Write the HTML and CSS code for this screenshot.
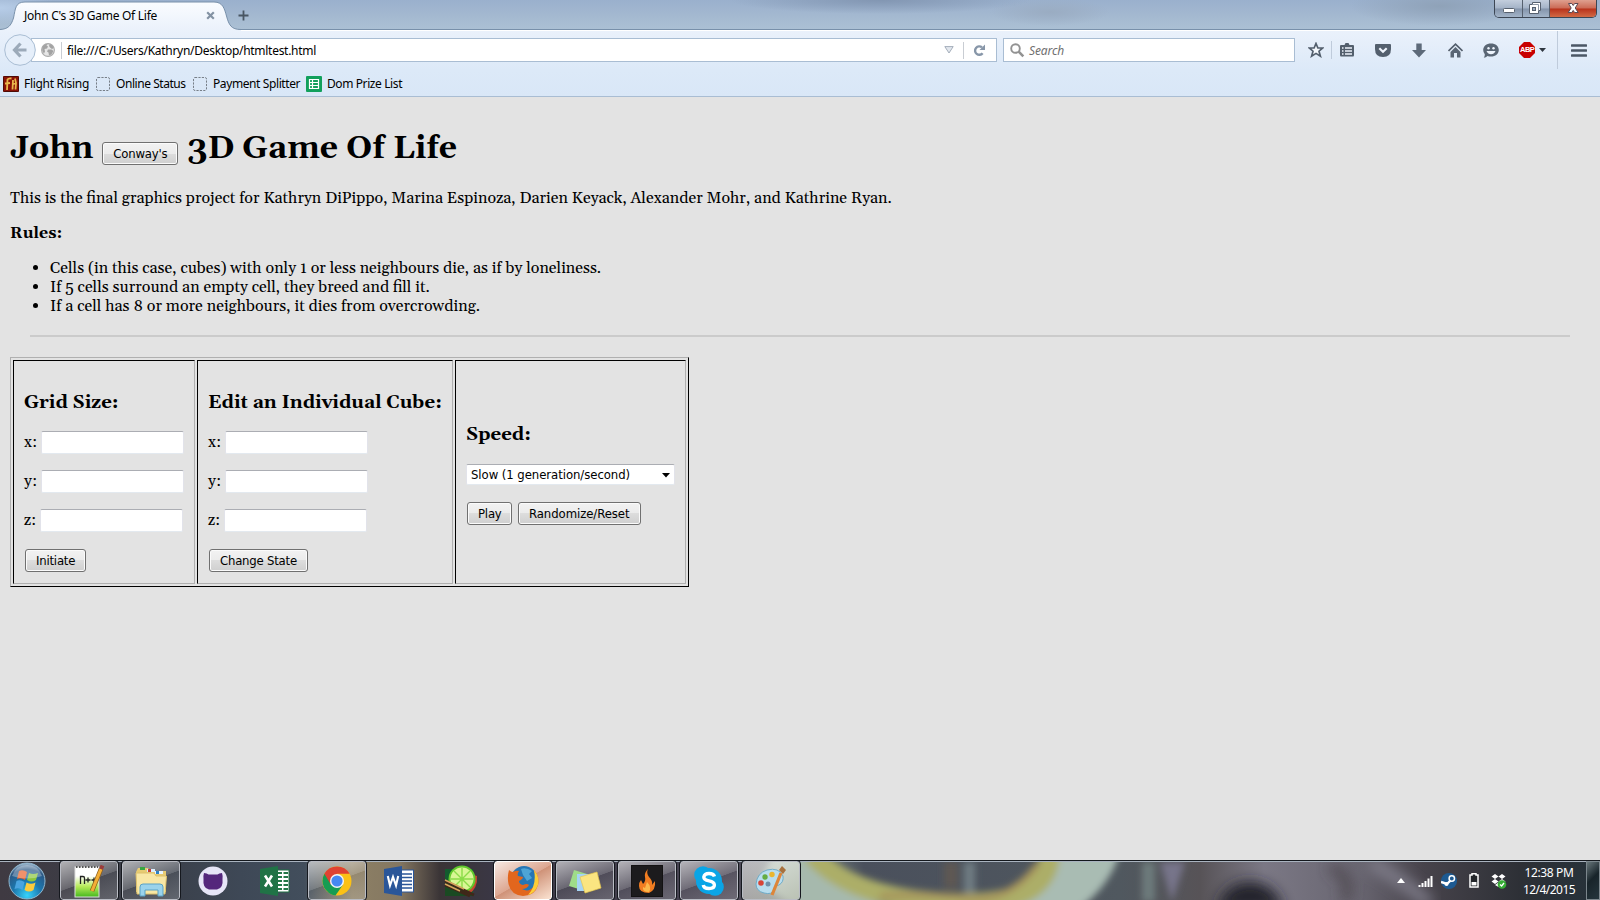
FILE: index.html
```html
<!DOCTYPE html>
<html lang="en">
<head>
<meta charset="utf-8">
<title>John C's 3D Game Of Life</title>
<link rel="stylesheet" href="styles.css">
</head>
<body>
<div class="screen">
  <header class="titlebar">
    <div class="tab">
      <svg class="tab-shape" width="242" height="31" viewBox="0 0 242 31"><path d="M0 31V29.5C8 29 11 26 13.500 18C15.500 9 15 2 25 2H214C223 2 224.500 9 226.500 16C229 25 231 29.500 241 29.500V31Z" fill="url(#tabg)"/><path d="M0 29.500C8 29 11 26 13.500 18C15.500 9 15 2 25 2H214C223 2 224.500 9 226.500 16C229 25 231 29.500 241 29.500" fill="none" stroke="#7890aa"/><defs><linearGradient id="tabg" x2="0" y2="1"><stop stop-color="#fafcff"/><stop offset="1" stop-color="#eaf1fb"/></linearGradient></defs></svg>
      <span class="tab-title">John C's 3D Game Of Life</span>
      <svg class="tab-x" width="9" height="9" viewBox="0 0 9 9"><path d="M1.200 1.200L7.800 7.800M7.800 1.200L1.200 7.800" stroke="#8392a3" stroke-width="2.200"/></svg>
    </div>
    <svg class="plus" width="11" height="11" viewBox="0 0 11 11"><path d="M5.500 .5V10.500M.5 5.500H10.500" stroke="#495663" stroke-width="1.800"/></svg>
    <div class="winbtns">
      <span class="wb wmin"><svg width="28" height="17"><rect x="8.500" y="8.500" width="11" height="4" rx="1" fill="#fff" stroke="#56606e"/></svg></span>
      <span class="wb wmax"><svg width="26" height="17"><path d="M9.500 2.500H17.500V10.500H15.500V13.500H6.500V4.500H9.500Z" fill="#fff" stroke="#56606e"/><path d="M9.500 4.500H15.500V10.500" fill="none" stroke="#8b95a3"/><rect x="9.500" y="7.500" width="3" height="3" fill="#9aabc0" stroke="#56606e"/></svg></span>
      <span class="wb wclose"><svg width="46" height="17"><path d="M18.500 3.500H21.800L23.200 5.500L24.600 3.500H28L25.200 8L28.200 12.500H24.600L23.200 10.400L21.800 12.500H18.200L21.200 8Z" fill="#fff" stroke="#5b4a55"/></svg></span>
    </div>
  </header>
  <nav class="toolbar">
    <svg class="back" width="32" height="32" viewBox="0 0 32 32"><circle cx="16" cy="16" r="15.300" fill="#e6effa" stroke="#a9bdd3"/><path d="M10.500 16H22.500M16.500 9.500L10.500 16L16.500 22.500" fill="none" stroke="#9caab9" stroke-width="3.200"/></svg>
    <div class="urlbar">
      <svg class="globe" width="14" height="14" viewBox="0 0 14 14"><circle cx="7" cy="7" r="6.400" fill="#e6e6e6" stroke="#aaa" stroke-width="1.100"/><path d="M1.200 4.500Q3 1 6.500 1L5.500 2.500L7 3.500L6 5.500L3.500 6L4 8.500L3 10.500Q.5 8 1.200 4.500Z" fill="#a3a3a3"/><path d="M8.500 1.200Q11.500 1.500 12.800 5L11 6L9 4.500L8 3ZM7 6.500L10.500 6.500L12.500 8L10.500 11.500L8 12.500L7.500 9.500L6 8.500Z" fill="#a3a3a3"/></svg>
      <i class="vline"></i>
      <span class="url">file:///C:/Users/Kathryn/Desktop/htmltest.html</span>
      <svg class="drop" width="10" height="8" viewBox="0 0 10 8"><path d="M.8 .6H9.200L5 7Z" fill="#e2e7ee" stroke="#a4aeba"/></svg>
      <i class="vline v2"></i>
      <svg class="reload" width="13" height="13" viewBox="0 0 13 13"><path d="M9.600 9.200A4.200 4.200 0 1 1 9 3.400" fill="none" stroke="#8796a8" stroke-width="2.400"/><path d="M12 .5V6H6.500Z" fill="#8796a8"/></svg>
    </div>
    <div class="search">
      <svg width="15" height="15" viewBox="0 0 15 15"><circle cx="5.500" cy="5.500" r="4.300" fill="none" stroke="#929292" stroke-width="1.900"/><path d="M8.700 8.700L13.300 13.300" stroke="#929292" stroke-width="2.600"/></svg>
      <span class="ph">Search</span>
    </div>
    <div class="icons">
      <svg width="16" height="16" viewBox="0 0 16 16"><path d="M8 1.500L9.900 6H14.700L11 9.200L12.400 14.200L8 11.400L3.600 14.200L5 9.200L1.300 6H6.100Z" fill="#f4f8fd" stroke="#535f6d" stroke-width="1.700"/></svg>
      <i class="sep"></i>
      <svg class="i2" width="16" height="16" viewBox="0 0 16 16"><path d="M2 3H5.500L6.500 1H9.500L10.500 3H14Q15 3 15 4V13Q15 14.500 14 14.500H2Q1 14.500 1 13V4Q1 3 2 3Z" fill="#535f6d"/><path d="M3 6H4.500M6 6H13M3 9H4.500M6 9H13M3 12H4.500M6 12H13" stroke="#eef4fc" stroke-width="1.500"/></svg>
      <svg class="i3" width="16" height="15" viewBox="0 0 16 15"><path d="M1 1H15Q16 1 16 2V6Q16 14 8 14Q0 14 0 6V2Q0 1 1 1Z" fill="#535f6d"/><path d="M4.300 5.300L8 8.800L11.700 5.300" fill="none" stroke="#eef4fc" stroke-width="2.200"/></svg>
      <svg class="i4" width="14" height="15" viewBox="0 0 14 15"><path d="M4.300 .5H9.700V7H14L7 14.500L0 7H4.300Z" fill="#5d6a79"/></svg>
      <svg class="i5" width="15" height="15" viewBox="0 0 15 15"><path d="M.5 8L7.500 1.200L14.500 8" fill="none" stroke="#535f6d" stroke-width="1.700"/><path d="M7.500 4L12.500 9V14.500H9V10H6V14.500H2.500V9Z" fill="#5a6674"/></svg>
      <svg class="i6" width="16" height="15" viewBox="0 0 16 15"><path d="M8 .5C12.500 .5 15.800 3.200 15.800 7S12.500 13.500 8 13.500Q6 13.500 4.500 12.900Q3 14.700 .8 14.700Q2 13 1.800 11.200Q.2 9.500 .2 7C.2 3.200 3.500 .5 8 .5Z" fill="#5a6674"/><circle cx="5.500" cy="5.300" r="1.200" fill="#eef4fc"/><circle cx="10.500" cy="5.300" r="1.200" fill="#eef4fc"/><path d="M3.500 8H12.500Q11 11.200 8 11.200T3.500 8Z" fill="#eef4fc"/></svg>
      <span class="abp"><svg width="16" height="16" viewBox="0 0 16 16"><path d="M5 0H11L16 5V11L11 16H5L0 11V5Z" fill="#c80000"/></svg><b>ABP</b></span>
      <svg class="i8" width="7" height="4" viewBox="0 0 7 4"><path d="M0 0H7L3.500 4Z" fill="#2f3740"/></svg>
      <i class="sep s2"></i>
      <svg class="i9" width="16" height="13" viewBox="0 0 16 13"><path d="M1 1.500H15M1 6.500H15M1 11.500H15" stroke="#4b5765" stroke-width="2.600" stroke-linecap="round"/></svg>
    </div>
  </nav>
  <div class="bookmarks">
    <svg width="16" height="16" viewBox="0 0 16 16"><rect width="16" height="16" rx="1" fill="#8a1206"/><path d="M4 14L4.500 3.500Q5.500 2 8.500 2.500M2 7.500L7 7M9.500 13.500L10 4M9.500 8.500L13 7M12.500 13.500L13 7L12 2.500" fill="none" stroke="#e9b64c" stroke-width="1.800"/><rect x=".5" y=".5" width="15" height="15" rx="1" fill="none" stroke="#4d0c06"/></svg>
    <span class="bm b1">Flight Rising</span>
    <svg width="14" height="14" viewBox="0 0 14 14"><rect x=".5" y=".5" width="13" height="13" rx="1.500" fill="none" stroke="#777f88" stroke-dasharray="2.200 1.200"/></svg>
    <span class="bm b2">Online Status</span>
    <svg width="14" height="14" viewBox="0 0 14 14"><rect x=".5" y=".5" width="13" height="13" rx="1.500" fill="none" stroke="#777f88" stroke-dasharray="2.200 1.200"/></svg>
    <span class="bm b3">Payment Splitter</span>
    <svg width="16" height="16" viewBox="0 0 16 16"><rect width="16" height="16" rx="1" fill="#12a05c"/><path d="M3.500 3.500H12.500V12.500H3.500ZM3.500 6.500H12.500M3.500 9.500H12.500M6.500 3.500V12.500" fill="none" stroke="#fff" stroke-width="1.200"/></svg>
    <span class="bm b4">Dom Prize List</span>
  </div>

  <main class="page">
    <h1>John <button class="btn conway">Conway's</button> 3D Game Of Life</h1>
    <p class="intro">This is the final graphics project for Kathryn DiPippo, Marina Espinoza, Darien Keyack, Alexander Mohr, and Kathrine Ryan.</p>
    <p class="rules"><b>Rules:</b></p>
    <ul>
      <li>Cells (in this case, cubes) with only 1 or less neighbours die, as if by loneliness.</li>
      <li>If 5 cells surround an empty cell, they breed and fill it.</li>
      <li>If a cell has 8 or more neighbours, it dies from overcrowding.</li>
    </ul>
    <hr>
    <section class="grid">
      <div class="cell c1">
        <h3>Grid Size:</h3>
        <label><span class="lab">x:</span><input></label>
        <label><span class="lab">y:</span><input></label>
        <label><span class="lab lz">z:</span><input></label>
        <button class="btn">Initiate</button>
      </div>
      <div class="cell c2">
        <h3>Edit an Individual Cube:</h3>
        <label><span class="lab">x:</span><input></label>
        <label><span class="lab">y:</span><input></label>
        <label><span class="lab lz">z:</span><input></label>
        <button class="btn">Change State</button>
      </div>
      <div class="cell c3">
        <h3>Speed:</h3>
        <div class="select"><span>Slow (1 generation/second)</span><svg width="8" height="5" viewBox="0 0 8 5"><path d="M0 0H8L4 4.600Z"/></svg></div>
        <div class="btns"><button class="btn play">Play</button><button class="btn rand">Randomize/Reset</button></div>
      </div>
    </section>
  </main>

  <footer class="taskbar">
    <svg class="wall" width="1600" height="40" viewBox="0 0 1600 40">
      <defs><filter id="bl" x="-5%" y="-50%" width="110%" height="200%"><feGaussianBlur stdDeviation="7"/></filter><filter id="bs" x="-5%" y="-50%" width="110%" height="200%"><feGaussianBlur stdDeviation="3.500"/></filter>
      <linearGradient id="wg"><stop stop-color="#3f3a42"/><stop offset=".1" stop-color="#3a3f49"/><stop offset=".15" stop-color="#3e4856"/><stop offset=".19" stop-color="#424e5c"/><stop offset=".22" stop-color="#8d8065"/><stop offset=".25" stop-color="#847761"/><stop offset=".275" stop-color="#3a3436"/><stop offset=".31" stop-color="#3a3745"/><stop offset=".46" stop-color="#4a4654"/><stop offset=".5" stop-color="#7c8a88"/><stop offset=".54" stop-color="#4a505c"/><stop offset=".7" stop-color="#50585f"/><stop offset=".75" stop-color="#575357"/><stop offset=".79" stop-color="#7b7885"/><stop offset=".85" stop-color="#686570"/><stop offset=".89" stop-color="#47434b"/><stop offset=".95" stop-color="#2d3036"/><stop offset="1" stop-color="#26323a"/></linearGradient></defs>
      <rect width="1600" height="40" fill="url(#wg)"/>
      <g filter="url(#bs)"><path d="M775 -10H805Q840 30 900 50H800L760 20Z" fill="#a6b9ad"/><path d="M1120 -10H1055Q1020 30 980 50H1075Q1110 25 1120 -10Z" fill="#a9bcb3"/><path d="M812 -8Q850 36 948 41T1050 -8" fill="none" stroke="#acae68" stroke-width="20"/><path d="M880 34Q930 32 970 36T1038 2" fill="none" stroke="#a5915a" stroke-width="6"/><path d="M944 0H958V26H944Z" fill="#5f5952"/><path d="M964 0H975V31H964Z" fill="#6f7d83"/><path d="M1142 0H1155V40H1142Z" fill="#6d7a7c"/><path d="M1160 0H1185L1172 40Z" fill="#77748a"/></g>
      <g filter="url(#bl)"><path d="M1216 48Q1225 20 1250 20T1284 48Z" fill="#202029"/><path d="M1370 0Q1405 20 1430 42" stroke="#817f8c" stroke-width="12" fill="none"/><path d="M1330 5Q1355 15 1345 40" stroke="#4b444b" stroke-width="8" fill="none"/></g>
    </svg>
    <div class="tasks">
      <span class="task"><svg width="38" height="38" viewBox="0 0 38 38"><defs><radialGradient id="orb" cx=".5" cy=".9" r=".9"><stop stop-color="#37d3fb"/><stop offset=".45" stop-color="#1c76ad"/><stop offset=".8" stop-color="#2b5784"/><stop offset="1" stop-color="#a8c0d4"/></radialGradient></defs><circle cx="19" cy="19" r="18" fill="url(#orb)" stroke="#8fb7cf"/><path d="M11 9Q15 7 19 10L17 18Q13 15 9 17Z" fill="#e8622c"/><path d="M21 11Q25 13 30 11L28 18Q24 21 19 18Z" fill="#8cc63e"/><path d="M8.500 19Q12 17 16.500 20L14.500 28Q11 25 6.500 27Z" fill="#4aa4e0"/><path d="M18.500 20.500Q23 23 27.500 20.500L25.500 28Q21 31 16.500 28Z" fill="#fccb3c"/><path d="M4 14Q8 3 19 3T34 14Q19 19 4 14Z" fill="#fff" opacity=".3"/></svg></span>
      <span class="task on"><svg width="32" height="34" viewBox="0 0 32 34"><defs><linearGradient id="np" x2="0" y2="1"><stop offset=".3" stop-color="#fff"/><stop offset=".65" stop-color="#b6ea58"/><stop offset="1" stop-color="#45b81d"/></linearGradient></defs><rect x="2" y="3" width="24" height="30" fill="url(#np)" stroke="#ddd"/><path d="M3 3H25" stroke="#555" stroke-width="2" stroke-dasharray="1.500 1.500"/><path d="M7.500 20V12.500H10Q11.500 12.500 11.500 14V20M12.500 16H17.500M15 13.500V18.500M18.500 16H23.500M21 13.500V18.500" fill="none" stroke="#222" stroke-width="1.300"/><path d="M28 5L19 27" stroke="#8a5b17" stroke-width="4.600"/><path d="M28 5L19 27" stroke="#f3ae37" stroke-width="3.200"/><path d="M29.500 1.500L28 5" stroke="#9b3c3b" stroke-width="4"/></svg></span>
      <span class="task on"><svg width="34" height="32" viewBox="0 0 34 32"><path d="M2 7L4 3H14L16 6H32V27H2Z" fill="#e7cb72"/><path d="M6 2H11V5H6Z" fill="#38a640"/><path d="M13 4H21V7H13Z" fill="#d9efff"/><path d="M14 4H17V7H14Z" fill="#c43b35"/><path d="M21 6H29V9H21Z" fill="#e8f4ff"/><path d="M22 6H25V9H22Z" fill="#2c81c4"/><path d="M2 8H20L22 11H32.500L31 29H3Z" fill="#f8e7a5" stroke="#dcc06c"/><path d="M6 31V22Q6 19 9 19H26Q29 19 29 22V31H24V25H11V31Z" fill="#9ad3ec" stroke="#5aa2c6"/></svg></span>
      <span class="task"><svg width="32" height="32" viewBox="0 0 32 32"><circle cx="16" cy="16" r="14.500" fill="#e6e5f7"/><path d="M7 8Q10 8 11.500 9.500H20.500Q22 8 25 8Q26 11 25.500 14Q26.500 23.500 20 24.500H12Q5.500 23.500 6.500 14Q6 11 7 8Z" fill="#54277c"/></svg></span>
      <span class="task"><svg width="32" height="32" viewBox="0 0 32 32"><rect x="15" y="5" width="15" height="22" fill="#fff" stroke="#1f7145"/><path d="M19 8H23M24.500 8H29M19 12H23M24.500 12H29M19 16H23M24.500 16H29M19 20H23M24.500 20H29M19 24H23M24.500 24H29" stroke="#237747" stroke-width="2"/><path d="M1 4L19 1V31L1 28Z" fill="#207346"/><path d="M6 10.500L13 21.500M13 10.500L6 21.500" stroke="#fff" stroke-width="2.600"/></svg></span>
      <span class="task on"><svg width="32" height="32" viewBox="0 0 32 32"><circle cx="16" cy="16" r="14.500" fill="#fbc116"/><path d="M16 16L3.400 8.800A14.500 14.500 0 0 0 14.500 30.400L22.100 19.500Z" fill="#179c52"/><path d="M3.400 8.800A14.500 14.500 0 0 1 28.600 8.800H16L9.800 19.500Z" fill="#df4232"/><circle cx="16" cy="16" r="7" fill="#f5f5f5"/><circle cx="16" cy="16" r="5.600" fill="#4688f1"/></svg></span>
      <span class="task"><svg width="32" height="32" viewBox="0 0 32 32"><rect x="14" y="5" width="16.500" height="22" fill="#fff" stroke="#2a5699"/><path d="M18 9H29M18 12.500H29M18 16H29M18 19.500H29M18 23H29" stroke="#2a5699" stroke-width="1.500"/><path d="M1 4L19 1V31L1 28Z" fill="#2a5699"/><path d="M4.800 11L7 20.500L10 12L13 20.500L15.200 11" fill="none" stroke="#fff" stroke-width="2.100"/></svg></span>
      <span class="task"><svg width="34" height="34" viewBox="0 0 34 34"><rect x="1" y="5" width="28" height="27" fill="#135c2e"/><path d="M20 8L33 12Q34 24 25 30Z" fill="#c44830"/><circle cx="18" cy="15" r="13.500" fill="#61c92d"/><circle cx="18" cy="15" r="11.500" fill="#d9f695"/><path d="M18 4V26M7 15H29M10 7L26 23M26 7L10 23" stroke="#8bdc48" stroke-width="1.400"/><path d="M1 32V16L30 32Z" fill="#1a4a22"/><path d="M1 17L30 31M1 21L26 32" stroke="#402719" stroke-width="3"/><path d="M1 16L20 25M1 20L16 27" stroke="#d6a35e" stroke-width="1.500"/></svg></span>
      <span class="task on fox"><svg width="32" height="32" viewBox="0 0 32 32"><circle cx="17" cy="14" r="13" fill="#2676b5"/><path d="M14 4Q19 2 25 6L22 9L25 13L20 16L16 10Z" fill="#4ea4d6"/><path d="M2 5Q4 7 6 7Q9 5 12 6Q10 9 11 11L16 12Q16 14 12 16Q12 19 16 20Q20 18 22 20Q20 24 15 24Q22 28 27 21Q30 16 27 5Q33 12 31 20Q28 31 16 31Q4 30 1.500 19Q0 12 2 5Z" fill="#e2661d"/><path d="M27 5Q33 12 31 20Q28 28 21 30Q30 20 27 5Z" fill="#fcce38"/></svg></span>
      <span class="task on"><svg width="34" height="32" viewBox="0 0 34 32"><path d="M6 5L19 9L14 25L1 21Z" fill="#9fdc89"/><path d="M9 9H25V26H9Z" fill="#a5d4f5"/><path d="M12 12L29 7L33 23L17 28Z" fill="#fbe581" stroke="#e6c74e" stroke-width=".7"/></svg></span>
      <span class="task on"><svg width="32" height="32" viewBox="0 0 32 32"><rect width="32" height="32" rx="1" fill="#1c1b1d" stroke="#0b0b0b"/><path d="M17 4Q15 8 18 12Q22 16 21 20L24 16Q25 25 18 28Q8 28 8 21Q8 17 10 15L12 19Q15 16 14 12Q13 8 17 4Z" fill="#f17d21"/><path d="M16 17Q21 22 18 27Q11 27 12 22L14 23Z" fill="#fbb84b"/></svg></span>
      <span class="task on"><svg width="32" height="32" viewBox="0 0 32 32"><circle cx="16" cy="16" r="13" fill="#0aa5e6"/><circle cx="10" cy="10" r="8.800" fill="#0aa5e6"/><circle cx="22" cy="22" r="8.800" fill="#0aa5e6"/><path d="M21.500 11.500Q20.500 8.500 16 8.500T10.800 12Q10.800 15 16 15.900T21.400 20Q21.400 23.500 16 23.500T10.300 20" fill="none" stroke="#fff" stroke-width="3.400"/></svg></span>
      <span class="task on paint"><svg width="34" height="32" viewBox="0 0 34 32"><path d="M2 19Q3 8 13 5Q25 2 29 11Q30 17 25 20Q19 21 20 25Q18 30 10 28Q2 26 2 19Z" fill="#b9ddee" stroke="#6fabc7"/><circle cx="7" cy="18" r="2.800" fill="#d74437"/><circle cx="11" cy="12" r="2.700" fill="#65ad43"/><circle cx="18" cy="9.500" r="2.700" fill="#eab52f"/><circle cx="14" cy="19" r="2.500" fill="#6e91ab"/><path d="M27 8L18 30" stroke="#dd863a" stroke-width="3.200"/><path d="M28 1L25 5L29 9L32 5Z" fill="#a8713d"/></svg></span>
    </div>
    <div class="tray">
      <svg class="t1" width="8" height="5" viewBox="0 0 8 5"><path d="M4 0L8 5H0Z" fill="#fff"/></svg>
      <svg class="t2" width="16" height="12" viewBox="0 0 16 12"><path d="M1.500 12V10M4.500 12V8M7.500 12V6M10.500 12V3.500M13.500 12V1" stroke="#fff" stroke-width="2"/></svg>
      <svg class="t3" width="16" height="16" viewBox="0 0 16 16"><circle cx="8" cy="8" r="8" fill="#1d5a92"/><path d="M0 9L6 11L11 6" stroke="#fff" stroke-width="2.400" fill="none"/><circle cx="10.800" cy="5.500" r="2.700" fill="#1d5a92" stroke="#fff" stroke-width="1.500"/><circle cx="5.500" cy="11" r="2" fill="#fff"/></svg>
      <svg class="t4" width="10" height="15" viewBox="0 0 10 15"><path d="M3 2V.8H7V2H9V14H1V2Z" fill="#23262a" stroke="#fff" stroke-width="1.500"/><path d="M2.500 9H7.500V12.500H2.500Z" fill="#fff"/></svg>
      <svg class="t5" width="16" height="16" viewBox="0 0 16 16"><path d="M4 1L7.500 3.500L4 6L.5 3.500ZM11 1L14.500 3.500L11 6L7.500 3.500ZM4 6L7.500 8.500L4 11L.5 8.500ZM11 6L14.500 8.500L11 11L7.500 8.500ZM7.500 9.500L11 12L7.500 14L4 12Z" fill="#fff"/><circle cx="11" cy="11.500" r="4.300" fill="#36ac35"/><path d="M9 11.500L10.600 13L13 10" fill="none" stroke="#fff" stroke-width="1.300"/></svg>
      <div class="clock"><span class="time">12:38 PM</span><span class="date">12/4/2015</span></div>
      <i class="peek"></i>
    </div>
  </footer>
</div>
</body>
</html>
```

FILE: styles.css
```css
* { box-sizing: border-box; }
body { margin: 0; background: #e3e3e3; overflow: hidden; }
svg { display: block; flex: none; }
i { display: block; flex: none; }
.screen { width: 1600px; height: 900px; display: flex; flex-direction: column; overflow: hidden; color: #000; font: 12px "Noto Sans", sans-serif; white-space: nowrap; }

.titlebar { height: 30px; flex: none; display: flex; background: radial-gradient(ellipse 60px 16px at 0 8px, #b7cde8, transparent), radial-gradient(ellipse 150px 14px at 880px 0, #8296b2, transparent), radial-gradient(ellipse 60px 14px at 1050px 12px, #9aacc2, transparent), radial-gradient(ellipse 90px 20px at 1440px 6px, #8fa2b8, transparent), linear-gradient(#9ab0cd, #a3b8d0 50%, #abc0d4); border-bottom: 1px solid #7890aa; }
.tab { width: 242px; height: 30px; position: relative; display: flex; align-items: center; padding: 1px 0 0 24px; margin-right: -4px; }
.tab-shape { position: absolute; left: 0; top: 0; z-index: 0; }
.tab-title { position: relative; width: 182px; letter-spacing: -.27px; }
.tab-x { position: relative; }
.plus { margin: 10px 0 0 0; }
.winbtns { margin-left: auto; margin-right: 3px; display: flex; width: 103px; height: 18px; border: 1px solid #3c4654; border-top: 0; border-radius: 0 0 5px 5px; overflow: hidden; }
.wb { height: 17px; background: linear-gradient(#c3cedd, #a4b3c7 48%, #8494ab 52%, #a3b4c8); border-right: 1px solid #56606e; }
.wmin { width: 28px; } .wmax { width: 27px; }
.wclose { flex: 1; border: 0; background: linear-gradient(#dfa08f, #cb6a55 48%, #b8321b 52%, #d26a45); }

.toolbar { height: 40px; flex: none; display: flex; background: linear-gradient(#fff 0 1px, #eaf1fb 1px, #dce9f8); }
.back { margin: 4px -5px 0 4px; position: relative; z-index: 1; }
.urlbar, .search { height: 24px; margin-top: 8px; background: #fff; border: 1px solid #a9bdd3; display: flex; align-items: center; }
.urlbar { width: 966px; padding-left: 9px; }
.vline { width: 1px; height: 17px; background: #c9cdd3; margin: 0 5px 0 6px; }
.url { width: 877px; letter-spacing: -.28px; padding-top: 1px; }
.v2 { margin: 0 9px 0 9px; }
.search { width: 292px; margin-left: 6px; padding-left: 6px; }
.ph { margin-left: 4px; font-style: italic; color: #707070; letter-spacing: -.13px; }
.icons { display: flex; align-items: center; height: 40px; flex: 1; padding-left: 13px; }
.sep { width: 1px; height: 18px; background: #bfcbdb; margin: 0 7px; }
.i3 { margin-left: 20px; } .i4 { margin-left: 21px; } .i5 { margin-left: 22px; } .i6 { margin-left: 20px; }
.abp { position: relative; width: 16px; height: 16px; margin-left: 20px; }
.abp b { position: absolute; left: 1px; top: 3px; font: bold 7.500px/10px "Liberation Sans", sans-serif; letter-spacing: -.5px; color: #fff; }
.i8 { margin-left: 4px; }
.s2 { height: 38px; margin: 0 13px 0 11px; }

.bookmarks { height: 27px; flex: none; display: flex; align-items: center; padding: 1px 0 0 3px; background: linear-gradient(#dce9f8, #d9e7f7); border-bottom: 1px solid #a9bdd3; }
.bm { margin-left: 5px; letter-spacing: -.4px; }
.b1 { width: 72px; letter-spacing: -.3px; }
.b2 { width: 77px; letter-spacing: -.45px; margin-left: 6px; }
.b3 { width: 93px; margin-left: 6px; }

.page { flex: 1; padding: 0 10px; font: 16px/19px Gelasio, Georgia, "Liberation Serif", serif; background: #e3e3e3; min-height: 0; }
h1 { margin: 32px 0 0; height: 40px; line-height: 40px; font-size: 32px; }
p { margin: 0; }
.intro { margin-top: 20px; } .rules { margin-top: 16px; }
ul { margin: 16px 0 0; padding: 0 0 0 40px; }
hr { margin: 19px 20px 20px; border: 0; height: 2px; background: #cbcbcb; }
.grid { display: grid; grid-template-columns: 182px 256px 231px; gap: 2px; width: 679px; height: 230px; padding: 2px; border: 1px solid; border-color: #b0b0b0 #000 #000 #b0b0b0; }
.cell { border: 1px solid; border-color: #000 #b0b0b0 #b0b0b0 #000; padding: 31px 10px 0; }
h3 { margin: 0; font-size: 18.720px; line-height: 22px; }
.cell label { display: flex; align-items: center; height: 23px; margin-bottom: 16px; }
.lab { width: 13px; } .lz { width: 12px; }
h3 + label { margin-top: 17px; }
.cell input { width: 143px; height: 23px; margin-left: 4px; padding: 0; background: #fff; border: 1px solid; border-color: #abadb3 #e2e3ea #e3e9ef #e2e3ea; border-radius: 2px; }
.btn { height: 23px; border: 1px solid #707070; border-radius: 3px; padding: 1px 10px 0; background: linear-gradient(#f2f2f2, #ebebeb 50%, #ddd 50%, #cfcfcf); box-shadow: inset 0 0 0 1px #fbfbfb; font: 13px/20px "DejaVu Sans Condensed", sans-serif; color: #000; display: block; letter-spacing: -.21px; }
.conway { display: inline-block; vertical-align: 1px; width: 76px; margin: 0 1px; vertical-align: -5px; }
h1 .conway { vertical-align: 0.5px; }
.play { width: 45px; }
.rand { letter-spacing: -.07px; }
.cell .btn { margin-left: 1px; }
.c1 > .btn, .c2 > .btn { margin-top: 17px; }
.c3 { padding-top: 63px; }
.select { height: 21px; width: 209px; margin-top: 18px; border: 1px solid; border-color: #abadb3 #e2e3ea #e3e9ef #e2e3ea; border-radius: 2px; background: #fff; font: 13px/20px "DejaVu Sans Condensed", sans-serif; letter-spacing: -.06px; display: flex; align-items: center; justify-content: space-between; padding: 1px 4px 0 4px; }
.btns { display: flex; gap: 5px; margin-top: 17px; }

.taskbar { height: 40px; flex: none; position: relative; z-index: 0; display: flex; border-top: 1px solid #14181d; box-shadow: inset 0 1px #a9b3bf; }
.wall { position: absolute; left: 0; top: 1px; z-index: -1; }
.tasks { display: flex; gap: 4px; margin-left: -2px; }
.task { width: 58px; height: 39px; display: flex; align-items: center; justify-content: center; }
.on { border: 1px solid #b9bcc4; outline: 1px solid #15181e; border-radius: 3px; background: linear-gradient(160deg, rgba(255,255,255,.6), rgba(255,255,255,.22) 50%, rgba(255,255,255,.08) 51%, rgba(255,255,255,.2)); }
.fox { background: linear-gradient(150deg, #f6e9e3, #dda791 50%, #cf9278 51%, #fbe3d2); border-color: #fff; }
.paint { background: linear-gradient(150deg, rgba(255,255,255,.6), rgba(200,200,185,.6)); }
.tray { margin-left: auto; display: flex; align-items: center; color: #fff; }
.t2 { margin-left: 13px; } .t3 { margin-left: 7px; } .t4 { margin-left: 12px; } .t5 { margin-left: 12px; }
.clock { width: 62px; margin-left: 11px; margin-right: 1px; display: flex; flex-direction: column; align-items: center; line-height: 17px; }
.time { letter-spacing: -.37px; } .date { letter-spacing: -.55px; }
.peek { width: 14px; height: 39px; margin-left: 5px; border: 1px solid #7c878d; background: linear-gradient(135deg, #68767a, #18242a 45%, #26363d); }
```
